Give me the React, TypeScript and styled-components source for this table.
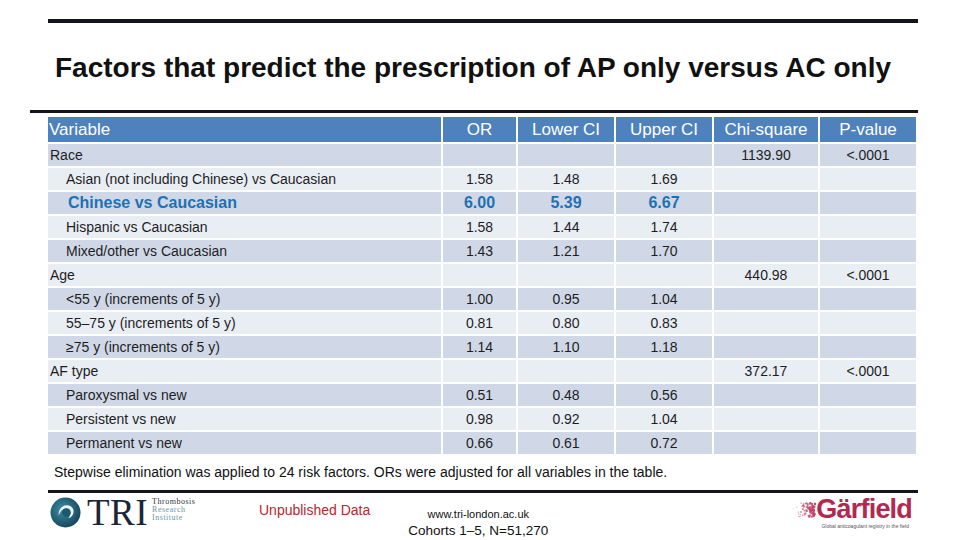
import React from 'react';
import styled, { createGlobalStyle } from 'styled-components';

const GlobalStyle = createGlobalStyle`
  html, body {
    margin: 0;
    padding: 0;
    background: #ffffff;
  }
  body {
    font-family: "Liberation Sans", Arial, sans-serif;
  }
`;

const Slide = styled.div`
  width: 960px;
  height: 540px;
  overflow: hidden;
  background: #ffffff;
  display: flex;
  flex-direction: column;
`;

const Rule = styled.div<{ $top: number; $left: number; $width: number; $thick: number }>`
  margin-top: ${(p) => p.$top}px;
  margin-left: ${(p) => p.$left}px;
  width: ${(p) => p.$width}px;
  height: ${(p) => p.$thick}px;
  background: #14141c;
  flex-shrink: 0;
`;

const Title = styled.h1`
  margin: 29px 0 0 55px;
  height: 58px;
  font-size: 28px;
  line-height: 32px;
  font-weight: bold;
  color: #111111;
  white-space: nowrap;
`;

const Table = styled.div`
  margin: 4px 0 0 48px;
  display: grid;
  grid-template-columns: 393px 73px 96px 96px 104px 96px;
  grid-template-rows: 25px repeat(13, 22px);
  gap: 2px;
  width: 868px;
`;

const HeadCell = styled.div<{ $left?: boolean }>`
  background: #4f81bd;
  color: #ffffff;
  font-size: 17px;
  display: flex;
  align-items: center;
  justify-content: ${(p) => (p.$left ? 'flex-start' : 'center')};
  padding-left: ${(p) => (p.$left ? '1px' : '0')};
  white-space: nowrap;
`;

const Cell = styled.div<{ $dark: boolean; $left?: boolean; $indent?: number; $highlight?: boolean }>`
  background: ${(p) => (p.$dark ? '#d0d8e8' : '#e9edf4')};
  color: ${(p) => (p.$highlight ? '#2071b4' : '#1e1e1e')};
  font-size: ${(p) => (p.$highlight ? '16px' : '14px')};
  font-weight: ${(p) => (p.$highlight ? 'bold' : 'normal')};
  display: flex;
  align-items: center;
  justify-content: ${(p) => (p.$left ? 'flex-start' : 'center')};
  padding-left: ${(p) => (p.$left ? p.$indent ?? 2 : 0)}px;
  white-space: nowrap;
`;

const Footnote = styled.p`
  margin: 9px 0 0 54px;
  font-size: 14px;
  line-height: 18px;
  color: #111111;
  white-space: nowrap;
`;

const Footer = styled.div`
  display: flex;
  align-items: flex-start;
  padding-left: 50px;
  height: 47px;
`;

const TriLogo = styled.div`
  display: flex;
  align-items: center;
  margin-top: 4px;
  width: 150px;
`;

const TriMark = styled.span`
  font-family: "Liberation Serif", "Times New Roman", serif;
  font-size: 37px;
  line-height: 30px;
  color: #1b2738;
  margin-left: 6px;
  letter-spacing: 0.5px;
`;

const TriWords = styled.div`
  display: flex;
  flex-direction: column;
  margin-left: 4px;
  margin-top: -5px;
  font-family: "Liberation Serif", "Times New Roman", serif;
  font-size: 8px;
  line-height: 8px;
  letter-spacing: 0.5px;
`;

const TriWord = styled.span<{ $muted?: boolean }>`
  color: ${(p) => (p.$muted ? '#6b96a3' : '#2a3440')};
`;

const Unpublished = styled.div`
  margin: 9px 0 0 59px;
  font-size: 14px;
  line-height: 16px;
  color: #b8272d;
  white-space: nowrap;
`;

const WebBlock = styled.div`
  margin: 14px 0 0 36px;
  width: 144px;
  display: flex;
  flex-direction: column;
  align-items: center;
  color: #111111;
`;

const WebLine = styled.span<{ $size: number }>`
  font-size: ${(p) => p.$size}px;
  line-height: ${(p) => p.$size + 4}px;
  white-space: nowrap;
`;

const Garfield = styled.div`
  margin: 4px 48px 0 auto;
  display: flex;
  flex-direction: column;
  align-items: flex-end;
`;

const GarfieldRow = styled.div`
  display: flex;
  align-items: center;
  height: 24px;
`;

const GarfieldWord = styled.span`
  font-size: 27px;
  line-height: 24px;
  font-weight: bold;
  color: #b3284f;
  letter-spacing: -0.8px;
`;

const GarfieldTag = styled.span`
  margin-top: 2px;
  font-size: 5px;
  line-height: 6px;
  color: #555555;
  margin-right: 3px;
  white-space: nowrap;
`;

type Row = {
  label: string;
  cat?: boolean;
  highlight?: boolean;
  or?: string;
  lo?: string;
  hi?: string;
  chi?: string;
  p?: string;
};

const rows: Row[] = [
  { label: 'Race', cat: true, chi: '1139.90', p: '<.0001' },
  { label: 'Asian (not including Chinese) vs Caucasian', or: '1.58', lo: '1.48', hi: '1.69' },
  { label: 'Chinese vs Caucasian', highlight: true, or: '6.00', lo: '5.39', hi: '6.67' },
  { label: 'Hispanic vs Caucasian', or: '1.58', lo: '1.44', hi: '1.74' },
  { label: 'Mixed/other vs Caucasian', or: '1.43', lo: '1.21', hi: '1.70' },
  { label: 'Age', cat: true, chi: '440.98', p: '<.0001' },
  { label: '<55 y (increments of 5 y)', or: '1.00', lo: '0.95', hi: '1.04' },
  { label: '55–75 y (increments of 5 y)', or: '0.81', lo: '0.80', hi: '0.83' },
  { label: '≥75 y (increments of 5 y)', or: '1.14', lo: '1.10', hi: '1.18' },
  { label: 'AF type', cat: true, chi: '372.17', p: '<.0001' },
  { label: 'Paroxysmal vs new', or: '0.51', lo: '0.48', hi: '0.56' },
  { label: 'Persistent vs new', or: '0.98', lo: '0.92', hi: '1.04' },
  { label: 'Permanent vs new', or: '0.66', lo: '0.61', hi: '0.72' },
];

const headers = ['OR', 'Lower CI', 'Upper CI', 'Chi-square', 'P-value'];

function TriCircle(): React.ReactElement {
  return (
    <svg width="31" height="31" viewBox="0 0 32 32">
      <defs>
        <radialGradient id="triG" cx="0.4" cy="0.4" r="0.7">
          <stop offset="0" stopColor="#3f8ea3" />
          <stop offset="1" stopColor="#123d55" />
        </radialGradient>
      </defs>
      <circle cx="16" cy="16" r="15.5" fill="url(#triG)" />
      <path d="M9 19 C8 11 16 6 22 10 C26 13 25 20 19 22 C23 17 20 11 15 12 C11 13 10 17 9 19 Z" fill="#e8f3f5" />
      <circle cx="17" cy="16" r="4.5" fill="#1d5870" />
    </svg>
  );
}

// scattered pixel squares that fade out to the left of the Garfield word
let seed = 7;
function rand(): number {
  seed = (seed * 1103515245 + 12345) % 2147483648;
  return seed / 2147483648;
}
const dots = Array.from({ length: 70 }, () => {
  const t = Math.sqrt(rand());
  const x = t * 22;
  const y = 3 + rand() * 14;
  return { x, y, o: 0.15 + t * 0.85, s: 1 + t * 1.2 };
});

function GarfieldDots(): React.ReactElement {
  return (
    <svg width="24" height="20" viewBox="0 0 24 20">
      {dots.map((d, i) => (
        <rect key={i} x={d.x} y={d.y} width={d.s} height={d.s} fill="#c2406a" opacity={d.o} />
      ))}
    </svg>
  );
}

export default function App(): React.ReactElement {
  return (
    <>
      <GlobalStyle />
      <Slide>
        <Rule $top={19} $left={48} $width={870} $thick={4} />
        <Title>Factors that predict the prescription of AP only versus AC only</Title>
        <Rule $top={0} $left={30} $width={888} $thick={3} />
        <Table>
          <HeadCell $left>Variable</HeadCell>
          {headers.map((h) => (
            <HeadCell key={h}>{h}</HeadCell>
          ))}
          {rows.map((r, i) => {
            const dark = i % 2 === 0;
            return (
              <React.Fragment key={r.label}>
                <Cell $dark={dark} $left $indent={r.cat ? 2 : r.highlight ? 20 : 18} $highlight={r.highlight}>
                  {r.label}
                </Cell>
                <Cell $dark={dark} $highlight={r.highlight}>{r.or}</Cell>
                <Cell $dark={dark} $highlight={r.highlight}>{r.lo}</Cell>
                <Cell $dark={dark} $highlight={r.highlight}>{r.hi}</Cell>
                <Cell $dark={dark}>{r.chi}</Cell>
                <Cell $dark={dark}>{r.p}</Cell>
              </React.Fragment>
            );
          })}
        </Table>
        <Footnote>
          Stepwise elimination was applied to 24 risk factors. ORs were adjusted for all variables in the table.
        </Footnote>
        <Rule $top={9} $left={48} $width={870} $thick={3} />
        <Footer>
          <TriLogo>
            <TriCircle />
            <TriMark>TRI</TriMark>
            <TriWords>
              <TriWord>Thrombosis</TriWord>
              <TriWord $muted>Research</TriWord>
              <TriWord $muted>Institute</TriWord>
            </TriWords>
          </TriLogo>
          <Unpublished>Unpublished Data</Unpublished>
          <WebBlock>
            <WebLine $size={11}>www.tri-london.ac.uk</WebLine>
            <WebLine $size={13.5}>Cohorts 1–5, N=51,270</WebLine>
          </WebBlock>
          <Garfield>
            <GarfieldRow>
              <GarfieldDots />
              <GarfieldWord>Gärfield</GarfieldWord>
            </GarfieldRow>
            <GarfieldTag>Global anticoagulant registry in the field</GarfieldTag>
          </Garfield>
        </Footer>
      </Slide>
    </>
  );
}
